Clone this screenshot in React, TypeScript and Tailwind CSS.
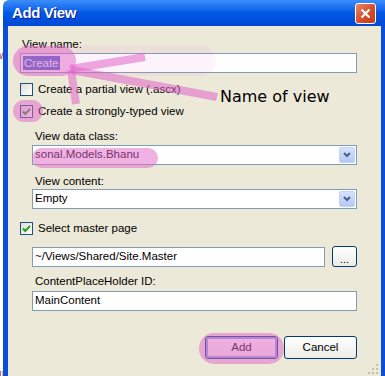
import React from 'react';

const font = { fontFamily: '"Liberation Sans", Arial, sans-serif' };

const Check = ({ checked }: { checked: boolean }) => (
  <div className="w-[13px] h-[13px] border border-[#1c5180] bg-gradient-to-br from-[#dcdcd7] to-white flex items-center justify-center shrink-0">
    {checked && (
      <svg width="9" height="9" viewBox="0 0 9 9">
        <path d="M1 4.5 L3.3 7 L8 1.8" fill="none" stroke="#21a121" strokeWidth="2" />
      </svg>
    )}
  </div>
);

const Select = ({ value }: { value: string }) => (
  <div className="h-[20px] border border-[#7f9db9] bg-white flex items-center">
    <span className="flex-1 pl-[2px] text-black">{value}</span>
    <div className="w-[16px] h-[16px] mr-[1px] rounded-[2px] border border-[#c3d3fd] bg-gradient-to-b from-[#d6e2fd] to-[#b4c8f6] flex items-center justify-center">
      <svg width="8" height="6" viewBox="0 0 8 6">
        <path d="M1 1 L4 4 L7 1" fill="none" stroke="#4d6185" strokeWidth="2" />
      </svg>
    </div>
  </div>
);

const XpButton = ({ label, isDefault }: { label: string; isDefault?: boolean }) => (
  <div className="w-[73px] h-[23px] rounded-[3px] border border-[#003c74] bg-gradient-to-b from-white to-[#ecebe6] flex items-center justify-center text-black">
    {isDefault ? (
      <div className="w-full h-full rounded-[2px] border-2 border-[#8ea5e9] flex items-center justify-center">{label}</div>
    ) : (
      label
    )}
  </div>
);

export default function App() {
  return (
    <div className="relative w-[385px] h-[376px] bg-white overflow-hidden flex" style={font}>
      {/* stray background bits */}
      <div className="w-[3px] shrink-0 relative text-[10px] text-[#b0251a] overflow-hidden">
        <span className="absolute left-[-4px] top-[48px]">w</span>
        <span className="absolute left-[-3px] top-[241px]">i</span>
        <span className="absolute left-[-1px] top-[366px]">ıı</span>
      </div>

      <div className="flex-1 flex flex-col">
        {/* title bar */}
        <div className="h-[26px] flex items-center justify-between pl-[9px] pr-[5px] bg-gradient-to-b from-[#3c8dfa] via-[#0058e6] to-[#0049d4] rounded-tl-[6px]">
          <span className="text-white font-bold text-[15px] tracking-[-0.4px] [text-shadow:1px_1px_0_#0a1c8a]">Add View</span>
          <div className="w-[21px] h-[21px] rounded-[3px] border border-white bg-gradient-to-br from-[#e8866a] via-[#d9502b] to-[#c23a18] flex items-center justify-center">
            <svg width="11" height="11" viewBox="0 0 11 11">
              <path d="M1.5 1.5 L9.5 9.5 M9.5 1.5 L1.5 9.5" stroke="white" strokeWidth="2.2" />
            </svg>
          </div>
        </div>

        {/* body */}
        <div className="flex-1 border-l-[5px] border-[#0a4fdc] bg-[#ece9d8] pl-[12px] pr-[24px] flex flex-col text-[11.5px] text-black">
          <div className="mt-[11px] h-[14px] leading-[14px] pl-[2px]">View name:</div>
          <div className="mt-[2px] h-[20px] border border-[#7f9db9] bg-white flex items-center pl-[2px]">
            <span className="bg-[#316ac5] text-white px-[1px] leading-[14px]">Create</span>
          </div>

          <div className="mt-[10px] h-[13px] flex items-center gap-[5px]">
            <Check checked={false} />
            <span>Create a partial view (.ascx)</span>
          </div>
          <div className="mt-[9px] h-[13px] flex items-center gap-[5px]">
            <Check checked />
            <span>Create a strongly-typed view</span>
          </div>

          <div className="pl-[12px] flex flex-col">
            <div className="mt-[11px] h-[14px] leading-[14px] pl-[3px]">View data class:</div>
            <div className="mt-[2px]">
              <Select value="sonal.Models.Bhanu" />
            </div>
            <div className="mt-[9px] h-[14px] leading-[14px] pl-[3px]">View content:</div>
            <div className="mt-[1px]">
              <Select value="Empty" />
            </div>
          </div>

          <div className="mt-[13px] h-[13px] flex items-center gap-[5px]">
            <Check checked />
            <span>Select master page</span>
          </div>

          <div className="pl-[12px] flex flex-col">
            <div className="mt-[11px] flex items-center gap-[7px]">
              <div className="flex-1 h-[20px] border border-[#7f9db9] bg-white flex items-center pl-[2px]">~/Views/Shared/Site.Master</div>
              <div className="w-[25px] h-[21px] rounded-[3px] border border-[#003c74] bg-gradient-to-b from-white to-[#ecebe6] flex items-end justify-center pb-[3px] text-[11px] leading-[8px]">...</div>
            </div>
            <div className="mt-[7px] h-[14px] leading-[14px] pl-[3px]">ContentPlaceHolder ID:</div>
            <div className="mt-[3px] h-[20px] border border-[#7f9db9] bg-white flex items-center pl-[2px]">MainContent</div>
          </div>

          <div className="mt-[25px] flex justify-end gap-[6px]">
            <XpButton label="Add" isDefault />
            <XpButton label="Cancel" />
          </div>

          <div className="flex justify-end mt-[4px] mr-[-22px]">
            <svg width="12" height="12" viewBox="0 0 12 12">
              <g fill="#c4c1b0">
                <rect x="9" y="1" width="2" height="2" />
                <rect x="5" y="5" width="2" height="2" />
                <rect x="9" y="5" width="2" height="2" />
                <rect x="1" y="9" width="2" height="2" />
                <rect x="5" y="9" width="2" height="2" />
                <rect x="9" y="9" width="2" height="2" />
              </g>
            </svg>
          </div>
        </div>
      </div>

      {/* right window border */}
      <div className="w-[4px] shrink-0 flex flex-col">
        <div className="h-[26px] bg-gradient-to-b from-[#3c8dfa] via-[#0058e6] to-[#0049d4]" />
        <div className="flex-1 bg-[#0a4fdc]" />
      </div>

      {/* annotation overlay */}
      <div className="absolute left-[13px] top-[45px] w-[203px] h-[31px] rounded-[15px] bg-[rgba(230,110,200,0.08)] pointer-events-none" />
      <div className="absolute left-[13px] top-[46px] w-[63px] h-[30px] rounded-[15px] bg-[rgba(225,100,200,0.5)] pointer-events-none" />
      <div className="absolute left-[13px] top-[100px] w-[30px] h-[22px] rounded-[11px] bg-[rgba(225,100,200,0.5)] pointer-events-none" />
      <div className="absolute left-[32px] top-[148px] w-[126px] h-[20px] rounded-[10px] bg-[rgba(225,100,200,0.5)] pointer-events-none" />
      <div className="absolute left-[199px] top-[333px] w-[85px] h-[31px] rounded-[15px] bg-[rgba(225,100,200,0.5)] pointer-events-none" />
      <svg className="absolute left-0 top-0 pointer-events-none" width="385" height="376">
        <g stroke="rgba(225,100,200,0.55)" strokeWidth="8" fill="none" strokeLinecap="butt">
          <path d="M217 97 L72 70" />
          <path d="M70 69 L145 57" />
          <path d="M71 70 L76 104" />
        </g>
      </svg>
      <span
        className="absolute left-[220px] top-[85px] text-[16px] text-black pointer-events-none"
        style={{ fontFamily: '"Comic Sans MS", "DejaVu Sans", sans-serif' }}
      >
        Name of view
      </span>
    </div>
  );
}
